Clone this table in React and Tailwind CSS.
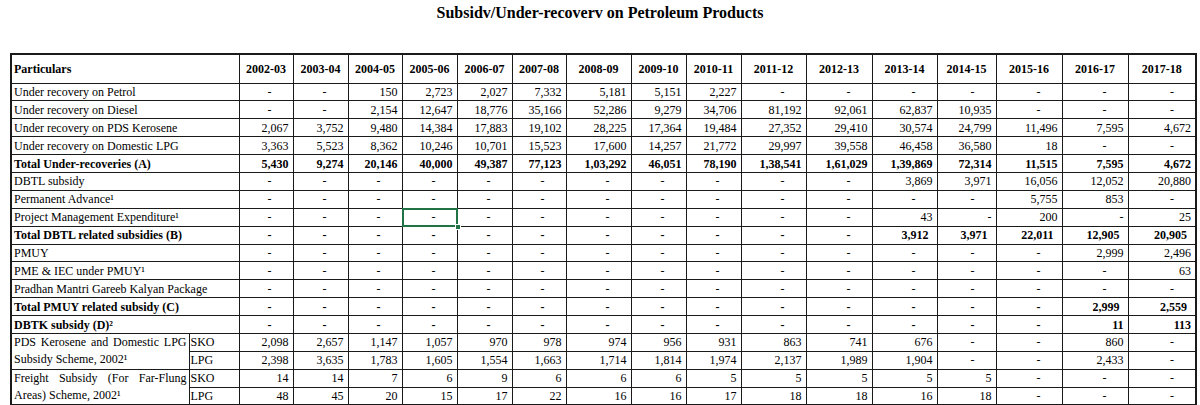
import React from 'react';

const years = [
    '2002-03', '2003-04', '2004-05', '2005-06', '2006-07', '2007-08', '2008-09', '2009-10',
    '2010-11', '2011-12', '2012-13', '2013-14', '2014-15', '2015-16', '2016-17', '2017-18',
];

const colWidths = [178, 50, 54, 55, 54, 55, 55, 54, 65, 55, 55, 65, 66, 65, 59, 66, 66, 68];

const d = (n) => Array(n).fill('-');

// 'r-' = dash typed as text (right aligned like a number)
const rows = [
    { label: 'Under recovery on Petrol', v: ['-', '-', '150', '2,723', '2,027', '7,332', '5,181', '5,151', '2,227', '-', '-', '-', '-', '-', '-', '-'] },
    { label: 'Under recovery on Diesel', v: ['-', '-', '2,154', '12,647', '18,776', '35,166', '52,286', '9,279', '34,706', '81,192', '92,061', '62,837', '10,935', '-', '-', '-'] },
    { label: 'Under recovery on PDS Kerosene', v: ['2,067', '3,752', '9,480', '14,384', '17,883', '19,102', '28,225', '17,364', '19,484', '27,352', '29,410', '30,574', '24,799', '11,496', '7,595', '4,672'] },
    { label: 'Under recovery on Domestic LPG', v: ['3,363', '5,523', '8,362', '10,246', '10,701', '15,523', '17,600', '14,257', '21,772', '29,997', '39,558', '46,458', '36,580', '18', '-', '-'] },
    { label: 'Total Under-recoveries (A)', bold: true, v: ['5,430', '9,274', '20,146', '40,000', '49,387', '77,123', '1,03,292', '46,051', '78,190', '1,38,541', '1,61,029', '1,39,869', '72,314', '11,515', '7,595', '4,672'] },
    { label: 'DBTL subsidy', v: [...d(11), '3,869', '3,971', '16,056', '12,052', '20,880'] },
    { label: 'Permanent Advance¹', v: [...d(13), '5,755', '853', '-'] },
    { label: 'Project Management Expenditure¹', v: [...d(11), '43', 'r-', '200', 'r-', '25'], selected: 3 },
    { label: 'Total DBTL related subsidies (B)', bold: true, pad: true, v: [...d(11), '3,912', '3,971', '22,011', '12,905', '20,905'] },
    { label: 'PMUY', v: [...d(14), '2,999', '2,496'] },
    { label: 'PME & IEC under PMUY¹', v: [...d(15), '63'] },
    { label: 'Pradhan Mantri Gareeb Kalyan Package', v: d(16) },
    { label: 'Total PMUY related subsidy (C)', bold: true, pad: true, v: [...d(14), '2,999', '2,559'] },
    { label: 'DBTK subsidy (D)²', bold: true, v: [...d(14), '11', '113'] },
];

const schemes = [
    {
        label: 'PDS Kerosene and Domestic LPG Subsidy Scheme, 2002¹',
        sko: ['2,098', '2,657', '1,147', '1,057', '970', '978', '974', '956', '931', '863', '741', '676', '-', '-', '860', '-'],
        lpg: ['2,398', '3,635', '1,783', '1,605', '1,554', '1,663', '1,714', '1,814', '1,974', '2,137', '1,989', '1,904', '-', '-', '2,433', '-'],
    },
    {
        label: 'Freight Subsidy (For Far-Flung Areas) Scheme, 2002¹',
        sko: ['14', '14', '7', '6', '9', '6', '6', '6', '5', '5', '5', '5', '5', '-', '-', '-'],
        lpg: ['48', '45', '20', '15', '17', '22', '16', '16', '17', '18', '18', '16', '18', '-', '-', '-'],
    },
];

const cellBase = 'border border-[#1a1a1a] p-0 align-middle whitespace-nowrap';

const ValueCell = ({ value, pad, selected }) => {
    let cls = 'text-right pr-[4px]';
    let text = value;
    if (value === '-') cls = 'text-right pr-[21px]';
    if (value === 'r-') text = '-';
    else if (pad && value !== '-') cls = 'text-right pr-[8px]';

    return (
        <td className={`${cellBase} ${cls} ${selected ? 'relative' : ''}`}>
            {text}
            {selected && (
                <>
                    <div className="absolute -inset-[1px] border-2 border-[#217346] pointer-events-none" />
                    <div className="absolute -right-[4px] -bottom-[4px] w-[6px] h-[6px] bg-[#217346] border border-white" />
                </>
            )}
        </td>
    );
};

const App = () => {
    return (
        <div className="w-[1200px] h-[405px] overflow-hidden bg-white text-black font-['Liberation_Serif',serif]">
            {/* Title, as printed on the sheet */}
            <div className="h-[20px] pt-[5px] text-center text-[16px] leading-[16px] font-bold">
                Subsidv/Under-recoverv on Petroleum Products
            </div>

            <table className="mt-[33px] ml-[10px] w-[1185px] table-fixed border-collapse border-2 border-[#1a1a1a] text-[12px] leading-[16px]">
                <colgroup>
                    {colWidths.map((w, i) => (
                        <col key={i} style={{ width: w }} />
                    ))}
                </colgroup>
                <tbody>
                    <tr className="h-[29px] font-bold">
                        <td colSpan={2} className={`${cellBase} text-left pl-[2px]`}>Particulars</td>
                        {years.map((y) => (
                            <td key={y} className={`${cellBase} text-center`}>{y}</td>
                        ))}
                    </tr>

                    {rows.map((r) => (
                        <tr key={r.label} className={`h-[17.9px] ${r.bold ? 'font-bold' : ''}`}>
                            <td colSpan={2} className={`${cellBase} text-left pl-[2px]`}>{r.label}</td>
                            {r.v.map((v, i) => (
                                <ValueCell key={i} value={v} pad={r.pad} selected={r.selected === i} />
                            ))}
                        </tr>
                    ))}

                    {schemes.map((s) => (
                        <React.Fragment key={s.label}>
                            <tr className="h-[17.9px]">
                                <td rowSpan={2} className="border border-[#1a1a1a] p-0 pl-[2px] pr-[2px] align-top text-justify leading-[17px]">
                                    {s.label}
                                </td>
                                <td className={`${cellBase} text-left pl-[1px]`}>SKO</td>
                                {s.sko.map((v, i) => (
                                    <ValueCell key={i} value={v} />
                                ))}
                            </tr>
                            <tr className="h-[17.9px]">
                                <td className={`${cellBase} text-left pl-[1px]`}>LPG</td>
                                {s.lpg.map((v, i) => (
                                    <ValueCell key={i} value={v} />
                                ))}
                            </tr>
                        </React.Fragment>
                    ))}
                </tbody>
            </table>
        </div>
    );
};

export default App;
